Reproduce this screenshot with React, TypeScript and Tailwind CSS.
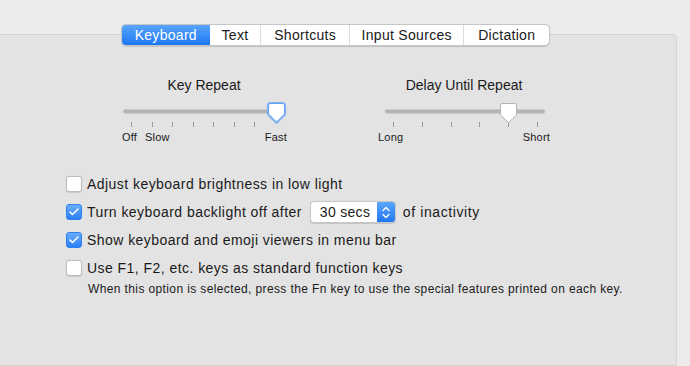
import { Check } from "lucide-react";

const font = { fontFamily: '"Liberation Sans", Arial, sans-serif' };

const tabs = [
  { label: "Keyboard", w: "w-[88px]", active: true },
  { label: "Text", w: "w-[51px]" },
  { label: "Shortcuts", w: "w-[89px]" },
  { label: "Input Sources", w: "w-[115px]" },
  { label: "Dictation", w: "w-[86px]" },
];

function Checkbox({ checked }: { checked?: boolean }) {
  if (checked) {
    return (
      <div className="flex h-[16px] w-[16px] shrink-0 items-center justify-center rounded-[3px] border border-[#2f80ef] bg-gradient-to-b from-[#69aefc] to-[#2a7df3]">
        <Check className="h-[12px] w-[12px] text-white" strokeWidth={3} />
      </div>
    );
  }
  return (
    <div className="h-[16px] w-[16px] shrink-0 rounded-[3px] border border-[#bdbdbd] bg-white shadow-[0_0.5px_1px_rgba(0,0,0,0.12)]" />
  );
}

function KeyRepeatSlider() {
  const ticks = [13, 34, 54, 75, 95, 116, 136];
  return (
    <div className="flex w-[172px] flex-col">
      <div className="h-[18px] text-center text-[14px] leading-[18px] text-[#1a1a1a]">Key Repeat</div>
      <svg width="172" height="36" viewBox="0 0 172 36">
        <rect x="5" y="15.5" width="150" height="4" rx="2" fill="#b4b4b4" />
        {ticks.map((t) => (
          <rect key={t} x={t} y="28" width="1" height="5" fill="#999999" />
        ))}
        <path
          d="M150.5 11.5 Q150.5 9.5 152.5 9.5 H164.5 Q166.5 9.5 166.5 11.5 V20 L158.5 28 L150.5 20 Z"
          fill="#ffffff"
          stroke="#7fb0f4"
          strokeWidth="3.2"
          strokeLinejoin="round"
        />
        <path
          d="M150.5 11.5 Q150.5 9.5 152.5 9.5 H164.5 Q166.5 9.5 166.5 11.5 V20 L158.5 28 L150.5 20 Z"
          fill="#ffffff"
          stroke="#6aa2f0"
          strokeWidth="1"
        />
      </svg>
      <div className="flex h-[14px] text-[11px] leading-[14px] tracking-[0.2px] text-[#1a1a1a]">
        <span className="ml-[4px]">Off</span>
        <span className="ml-[8px]">Slow</span>
        <span className="ml-auto mr-[3px]">Fast</span>
      </div>
    </div>
  );
}

function DelaySlider() {
  const ticks = [17, 46, 75, 103, 132, 161];
  return (
    <div className="flex w-[176px] flex-col">
      <div className="h-[18px] text-center text-[14px] leading-[18px] text-[#1a1a1a]">Delay Until Repeat</div>
      <svg width="176" height="36" viewBox="0 0 176 36">
        <rect x="9" y="15.5" width="160" height="4" rx="2" fill="#b4b4b4" />
        {ticks.map((t) => (
          <rect key={t} x={t} y="28" width="1" height="5" fill="#999999" />
        ))}
        <path
          d="M124.5 11 Q124.5 9.5 126 9.5 H139 Q140.5 9.5 140.5 11 V21 L132.5 28.5 L124.5 21 Z"
          fill="#ffffff"
          stroke="#b3b3b3"
          strokeWidth="1"
        />
      </svg>
      <div className="flex h-[14px] text-[11px] leading-[14px] tracking-[0.2px] text-[#1a1a1a]">
        <span className="ml-[2px]">Long</span>
        <span className="ml-auto mr-[2px]">Short</span>
      </div>
    </div>
  );
}

export default function App() {
  return (
    <div style={font} className="flex h-[366px] w-[690px] flex-col overflow-hidden bg-[#ececec] pt-[34px]">
      <div className="-ml-px mr-[13px] flex flex-1 flex-col rounded-tr-[5px] border border-[#d4d4d4] bg-[#e3e3e3]">
        {/* tabs */}
        <div className="-mt-[11px] ml-[121px] flex h-[22px] w-[429px] overflow-hidden rounded-[5px] border border-[#c6c6c6] bg-white shadow-[0_0.5px_1px_rgba(0,0,0,0.15)]">
          {tabs.map((t, i) => (
            <div
              key={t.label}
              className={
                t.active
                  ? `flex ${t.w} items-center justify-center bg-gradient-to-b from-[#58a5fd] to-[#1d76f2] text-[14px] tracking-[0.3px] text-white`
                  : `flex ${t.w} items-center justify-center text-[14px] tracking-[0.3px] text-[#1a1a1a] ${i > 1 ? "border-l border-[#dddddd]" : ""}`
              }
            >
              {t.label}
            </div>
          ))}
        </div>

        {/* sliders */}
        <div className="mt-[30px] flex">
          <div className="ml-[118px]">
            <KeyRepeatSlider />
          </div>
          <div className="ml-[86px]">
            <DelaySlider />
          </div>
        </div>

        {/* options */}
        <div className="mt-[26px] flex flex-col text-[14px] tracking-[0.45px] text-[#1a1a1a]">
          <div className="flex h-[28px] items-center pl-[66px]">
            <Checkbox />
            <span className="ml-[5px]">Adjust keyboard brightness in low light</span>
          </div>
          <div className="flex h-[28px] items-center pl-[66px]">
            <Checkbox checked />
            <span className="ml-[5px]">Turn keyboard backlight off after</span>
            <div className="ml-[8px] flex h-[22px] w-[86px] overflow-hidden rounded-[4px] border border-[#c8c8c8] bg-white shadow-[0_0.5px_1px_rgba(0,0,0,0.15)]">
              <span className="flex flex-1 items-center pl-[9px] tracking-[0.3px]">30 secs</span>
              <div className="flex w-[18px] flex-col items-center justify-center bg-gradient-to-b from-[#5aa6fd] to-[#1f77f2]">
                <svg width="10" height="15" viewBox="0 0 10 15" fill="none" stroke="white" strokeWidth="1.4" strokeLinecap="round" strokeLinejoin="round">
                  <path d="M2 5.5 L5 2.5 L8 5.5" />
                  <path d="M2 9.5 L5 12.5 L8 9.5" />
                </svg>
              </div>
            </div>
            <span className="ml-[7px] tracking-[0.6px]">of inactivity</span>
          </div>
          <div className="flex h-[28px] items-center pl-[66px]">
            <Checkbox checked />
            <span className="ml-[5px]">Show keyboard and emoji viewers in menu bar</span>
          </div>
          <div className="flex h-[28px] items-center pl-[66px]">
            <Checkbox />
            <span className="ml-[5px]">Use F1, F2, etc. keys as standard function keys</span>
          </div>
          <div className="ml-[88px] h-[14px] text-[12px] leading-[14px] tracking-[0.38px]">
            When this option is selected, press the Fn key to use the special features printed on each key.
          </div>
        </div>
      </div>
    </div>
  );
}
